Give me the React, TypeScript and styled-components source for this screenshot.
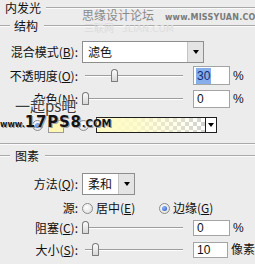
import * as React from 'react';
import styled, { createGlobalStyle } from 'styled-components';

const GlobalStyle = createGlobalStyle`
  html, body { margin: 0; padding: 0; background: #ececec; }
  body { font-family: "Noto Sans CJK SC", "Noto Sans", sans-serif; }
`;

const Panel = styled.div`
  position: relative;
  width: 255px;
  height: 264px;
  overflow: hidden;
  background: #ececec;
  color: #111;
  font-size: 12px;
  line-height: 14px;
  display: flex;
  flex-direction: column;
  padding-top: 1px;
  box-sizing: border-box;
`;

const Row = styled.div<{ $h: number; $mt: number }>`
  display: flex;
  align-items: center;
  height: ${(p) => p.$h}px;
  margin-top: ${(p) => p.$mt}px;
  flex-shrink: 0;
  white-space: nowrap;
`;

const Etch = styled.div<{ $w?: number; $ml?: number }>`
  ${(p) => (p.$w ? `width: ${p.$w}px;` : 'flex: 1;')}
  margin-left: ${(p) => p.$ml || 0}px;
  height: 0;
  border-top: 1px solid #a9a9a9;
  border-bottom: 1px solid #fbfbfb;
`;

const Heading = styled.span<{ $ml: number }>`
  margin-left: ${(p) => p.$ml}px;
  color: #111;
`;

const Label = styled.span`
  width: 78px;
  flex-shrink: 0;
  text-align: right;
  u { text-decoration: underline; text-underline-offset: 1px; }
`;

const Select = styled.div<{ $w: number }>`
  margin-left: 4px;
  width: ${(p) => p.$w}px;
  height: 22px;
  box-sizing: border-box;
  border: 1px solid #8e8e8e;
  background: #fff;
  display: flex;
  align-items: center;
`;

const SelectText = styled.span`
  flex: 1;
  padding-left: 5px;
`;

const SelectButton = styled.span`
  width: 15px;
  align-self: stretch;
  background: #e4e4e4;
  border-left: 1px solid #c4c4c4;
  display: flex;
  align-items: center;
  justify-content: center;
`;

const Caret = styled.span`
  width: 0;
  height: 0;
  border-left: 3px solid transparent;
  border-right: 3px solid transparent;
  border-top: 4px solid #000;
`;

const Slider = styled.div`
  position: relative;
  margin-left: 4px;
  width: 101px;
  height: 14px;
  flex-shrink: 0;
`;

const Track = styled.div<{ $from: number }>`
  position: absolute;
  left: ${(p) => p.$from}px;
  right: 0;
  top: 6px;
  height: 0;
  border-top: 1px solid #9d9d9d;
  border-bottom: 1px solid #fff;
`;

const Thumb = styled.div<{ $at: number }>`
  position: absolute;
  left: ${(p) => p.$at}px;
  top: 0;
  width: 7px;
  height: 13px;
  box-sizing: border-box;
  border: 1px solid #7c7c7c;
  border-radius: 4px 4px 1px 1px;
  background: linear-gradient(to bottom, #fdfdfd, #d6d6d6);
`;

const NumberBox = styled.div<{ $h: number; $sel?: boolean }>`
  margin-left: 10px;
  width: 37px;
  height: ${(p) => p.$h}px;
  box-sizing: border-box;
  border: 1px solid #a4a4a4;
  background: #fff;
  display: flex;
  align-items: center;
  padding-left: 2px;
  font-family: "Liberation Sans", Arial, sans-serif;
  font-size: 12px;
  span {
    padding: 1px 1px;
    ${(p) => (p.$sel ? 'background: #86aee8; color: #0d2d7c;' : '')}
  }
`;

const Unit = styled.span`
  margin-left: 3px;
  font-family: "Liberation Sans", "Noto Sans CJK SC", sans-serif;
  font-size: 12px;
`;

const Radio = styled.span<{ $checked?: boolean; $ml: number }>`
  margin-left: ${(p) => p.$ml}px;
  width: 11px;
  height: 11px;
  box-sizing: border-box;
  flex-shrink: 0;
  border-radius: 50%;
  border: 1px solid #8c8c8c;
  background: radial-gradient(circle at 40% 35%, #ffffff, #d8d8d8);
  display: flex;
  align-items: center;
  justify-content: center;
  &::after {
    content: '';
    width: 5px;
    height: 5px;
    border-radius: 50%;
    background: ${(p) => (p.$checked ? 'radial-gradient(circle at 35% 35%, #8fb8ff, #1c4fb8)' : 'transparent')};
  }
`;

const Option = styled.span<{ $w?: number }>`
  margin-left: 3px;
  ${(p) => (p.$w ? `width: ${p.$w}px;` : '')}
  u { text-decoration: underline; text-underline-offset: 1px; }
`;

const Swatch = styled.span<{ $ml: number }>`
  margin-left: ${(p) => p.$ml}px;
  width: 16px;
  height: 13px;
  box-sizing: border-box;
  border: 1px solid #9a9a9a;
  background: #fff5b4;
  align-self: flex-end;
`;

const Gradient = styled.div<{ $ml: number }>`
  margin-left: ${(p) => p.$ml}px;
  width: 121px;
  height: 16px;
  box-sizing: border-box;
  border: 1px solid #1e1e1e;
  display: flex;
`;

const GradientFill = styled.span`
  flex: 1;
  background:
    linear-gradient(to right, #fffcc4 0%, rgba(255, 252, 196, 0.85) 35%, rgba(255, 252, 196, 0) 100%),
    repeating-conic-gradient(#d2d2d2 0 25%, #ffffff 0 50%) 0 0 / 8px 8px;
`;

const GradientButton = styled.span`
  width: 10px;
  border-left: 1px solid #1e1e1e;
  background: #fff;
  display: flex;
  align-items: center;
  justify-content: center;
`;

const Mark = styled.div<{ $x: number; $y: number }>`
  position: absolute;
  left: ${(p) => p.$x}px;
  top: ${(p) => p.$y}px;
  white-space: nowrap;
  pointer-events: none;
  display: flex;
  align-items: baseline;
`;

const MarkCn = styled.span<{ $c: string; $size: number }>`
  color: ${(p) => p.$c};
  font-size: ${(p) => p.$size}px;
`;

const MarkLatin = styled.span<{ $c: string; $size: number; $bold?: boolean; $ml: number }>`
  margin-left: ${(p) => p.$ml}px;
  color: ${(p) => p.$c};
  font-size: ${(p) => p.$size}px;
  font-family: "DejaVu Sans", "Liberation Sans", sans-serif;
  font-weight: ${(p) => (p.$bold ? 700 : 400)};
  letter-spacing: 0.2px;
`;

const PsMark = styled.span`
  color: #3c3c3c;
  font-size: 15px;
  line-height: 16px;
  text-shadow: 0 0 2px #fff, 0 0 1px #fff;
`;

const SiteMark = styled.span<{ $size: number; $ls?: number }>`
  color: #141414;
  font-family: "DejaVu Sans", "Liberation Sans", sans-serif;
  font-weight: 700;
  font-size: ${(p) => p.$size}px;
  line-height: 14px;
  letter-spacing: ${(p) => p.$ls || 0}px;
  text-shadow: 0 0 2px #fff, 1px 1px 0 #888;
`;

export default function App() {
  return (
    <>
      <GlobalStyle />
      <Panel>
        <Row $h={14} $mt={0}>
          <Heading $ml={5}>内发光</Heading>
          <Etch $ml={5} />
        </Row>
        <Row $h={14} $mt={4}>
          <Etch $w={10} />
          <Heading $ml={4}>结构</Heading>
          <Etch $ml={6} />
        </Row>

        <Row $h={22} $mt={8}>
          <Label>混合模式(<u>B</u>):</Label>
          <Select $w={122}>
            <SelectText>滤色</SelectText>
            <SelectButton><Caret /></SelectButton>
          </Select>
        </Row>

        <Row $h={19} $mt={3}>
          <Label>不透明度(<u>O</u>):</Label>
          <Slider>
            <Track $from={3} />
            <Thumb $at={29} />
          </Slider>
          <NumberBox $h={19} $sel><span>30</span></NumberBox>
          <Unit>%</Unit>
        </Row>

        <Row $h={19} $mt={4}>
          <Label>杂色(<u>N</u>):</Label>
          <Slider>
            <Track $from={3} />
            <Thumb $at={0} />
          </Slider>
          <NumberBox $h={18}><span>0</span></NumberBox>
          <Unit>%</Unit>
        </Row>

        <Row $h={16} $mt={9}>
          <Radio $ml={32} $checked />
          <Swatch $ml={5} />
          <Radio $ml={14} />
          <Gradient $ml={7}>
            <GradientFill />
            <GradientButton><Caret /></GradientButton>
          </Gradient>
        </Row>

        <Row $h={2} $mt={10}>
          <Etch />
        </Row>

        <Row $h={14} $mt={4}>
          <Etch $w={10} />
          <Heading $ml={5}>图素</Heading>
          <Etch $ml={6} />
        </Row>

        <Row $h={22} $mt={10}>
          <Label>方法(<u>Q</u>):</Label>
          <Select $w={53}>
            <SelectText>柔和</SelectText>
            <SelectButton><Caret /></SelectButton>
          </Select>
        </Row>

        <Row $h={14} $mt={6}>
          <Label>源:</Label>
          <Radio $ml={4} />
          <Option $w={63}>居中(<u>E</u>)</Option>
          <Radio $ml={0} $checked />
          <Option>边缘(<u>G</u>)</Option>
        </Row>

        <Row $h={16} $mt={5}>
          <Label>阻塞(<u>C</u>):</Label>
          <Slider>
            <Track $from={3} />
            <Thumb $at={0} />
          </Slider>
          <NumberBox $h={16}><span>0</span></NumberBox>
          <Unit>%</Unit>
        </Row>

        <Row $h={16} $mt={6}>
          <Label>大小(<u>S</u>):</Label>
          <Slider>
            <Track $from={3} />
            <Thumb $at={10} />
          </Slider>
          <NumberBox $h={16}><span>10</span></NumberBox>
          <Unit>像素</Unit>
        </Row>

        <Mark $x={82} $y={8}>
          <MarkCn $c="#8a8a8a" $size={12}>思缘设计论坛</MarkCn>
          <MarkLatin $c="#7a7a7a" $size={8} $bold $ml={11}>www.MISSYUAN.COM</MarkLatin>
        </Mark>
        <Mark $x={84} $y={21}>
          <MarkCn $c="#dcdcdc" $size={10}>三联网</MarkCn>
          <MarkLatin $c="#dedede" $size={9} $ml={8}>3LIAN.COM</MarkLatin>
        </Mark>
        <Mark $x={15} $y={98}>
          <PsMark>一起ps吧</PsMark>
        </Mark>
        <Mark $x={0} $y={115}>
          <SiteMark $size={8}>www.</SiteMark>
          <SiteMark $size={15} $ls={0.8}>17PS8</SiteMark>
          <SiteMark $size={10}>.COM</SiteMark>
        </Mark>
      </Panel>
    </>
  );
}
